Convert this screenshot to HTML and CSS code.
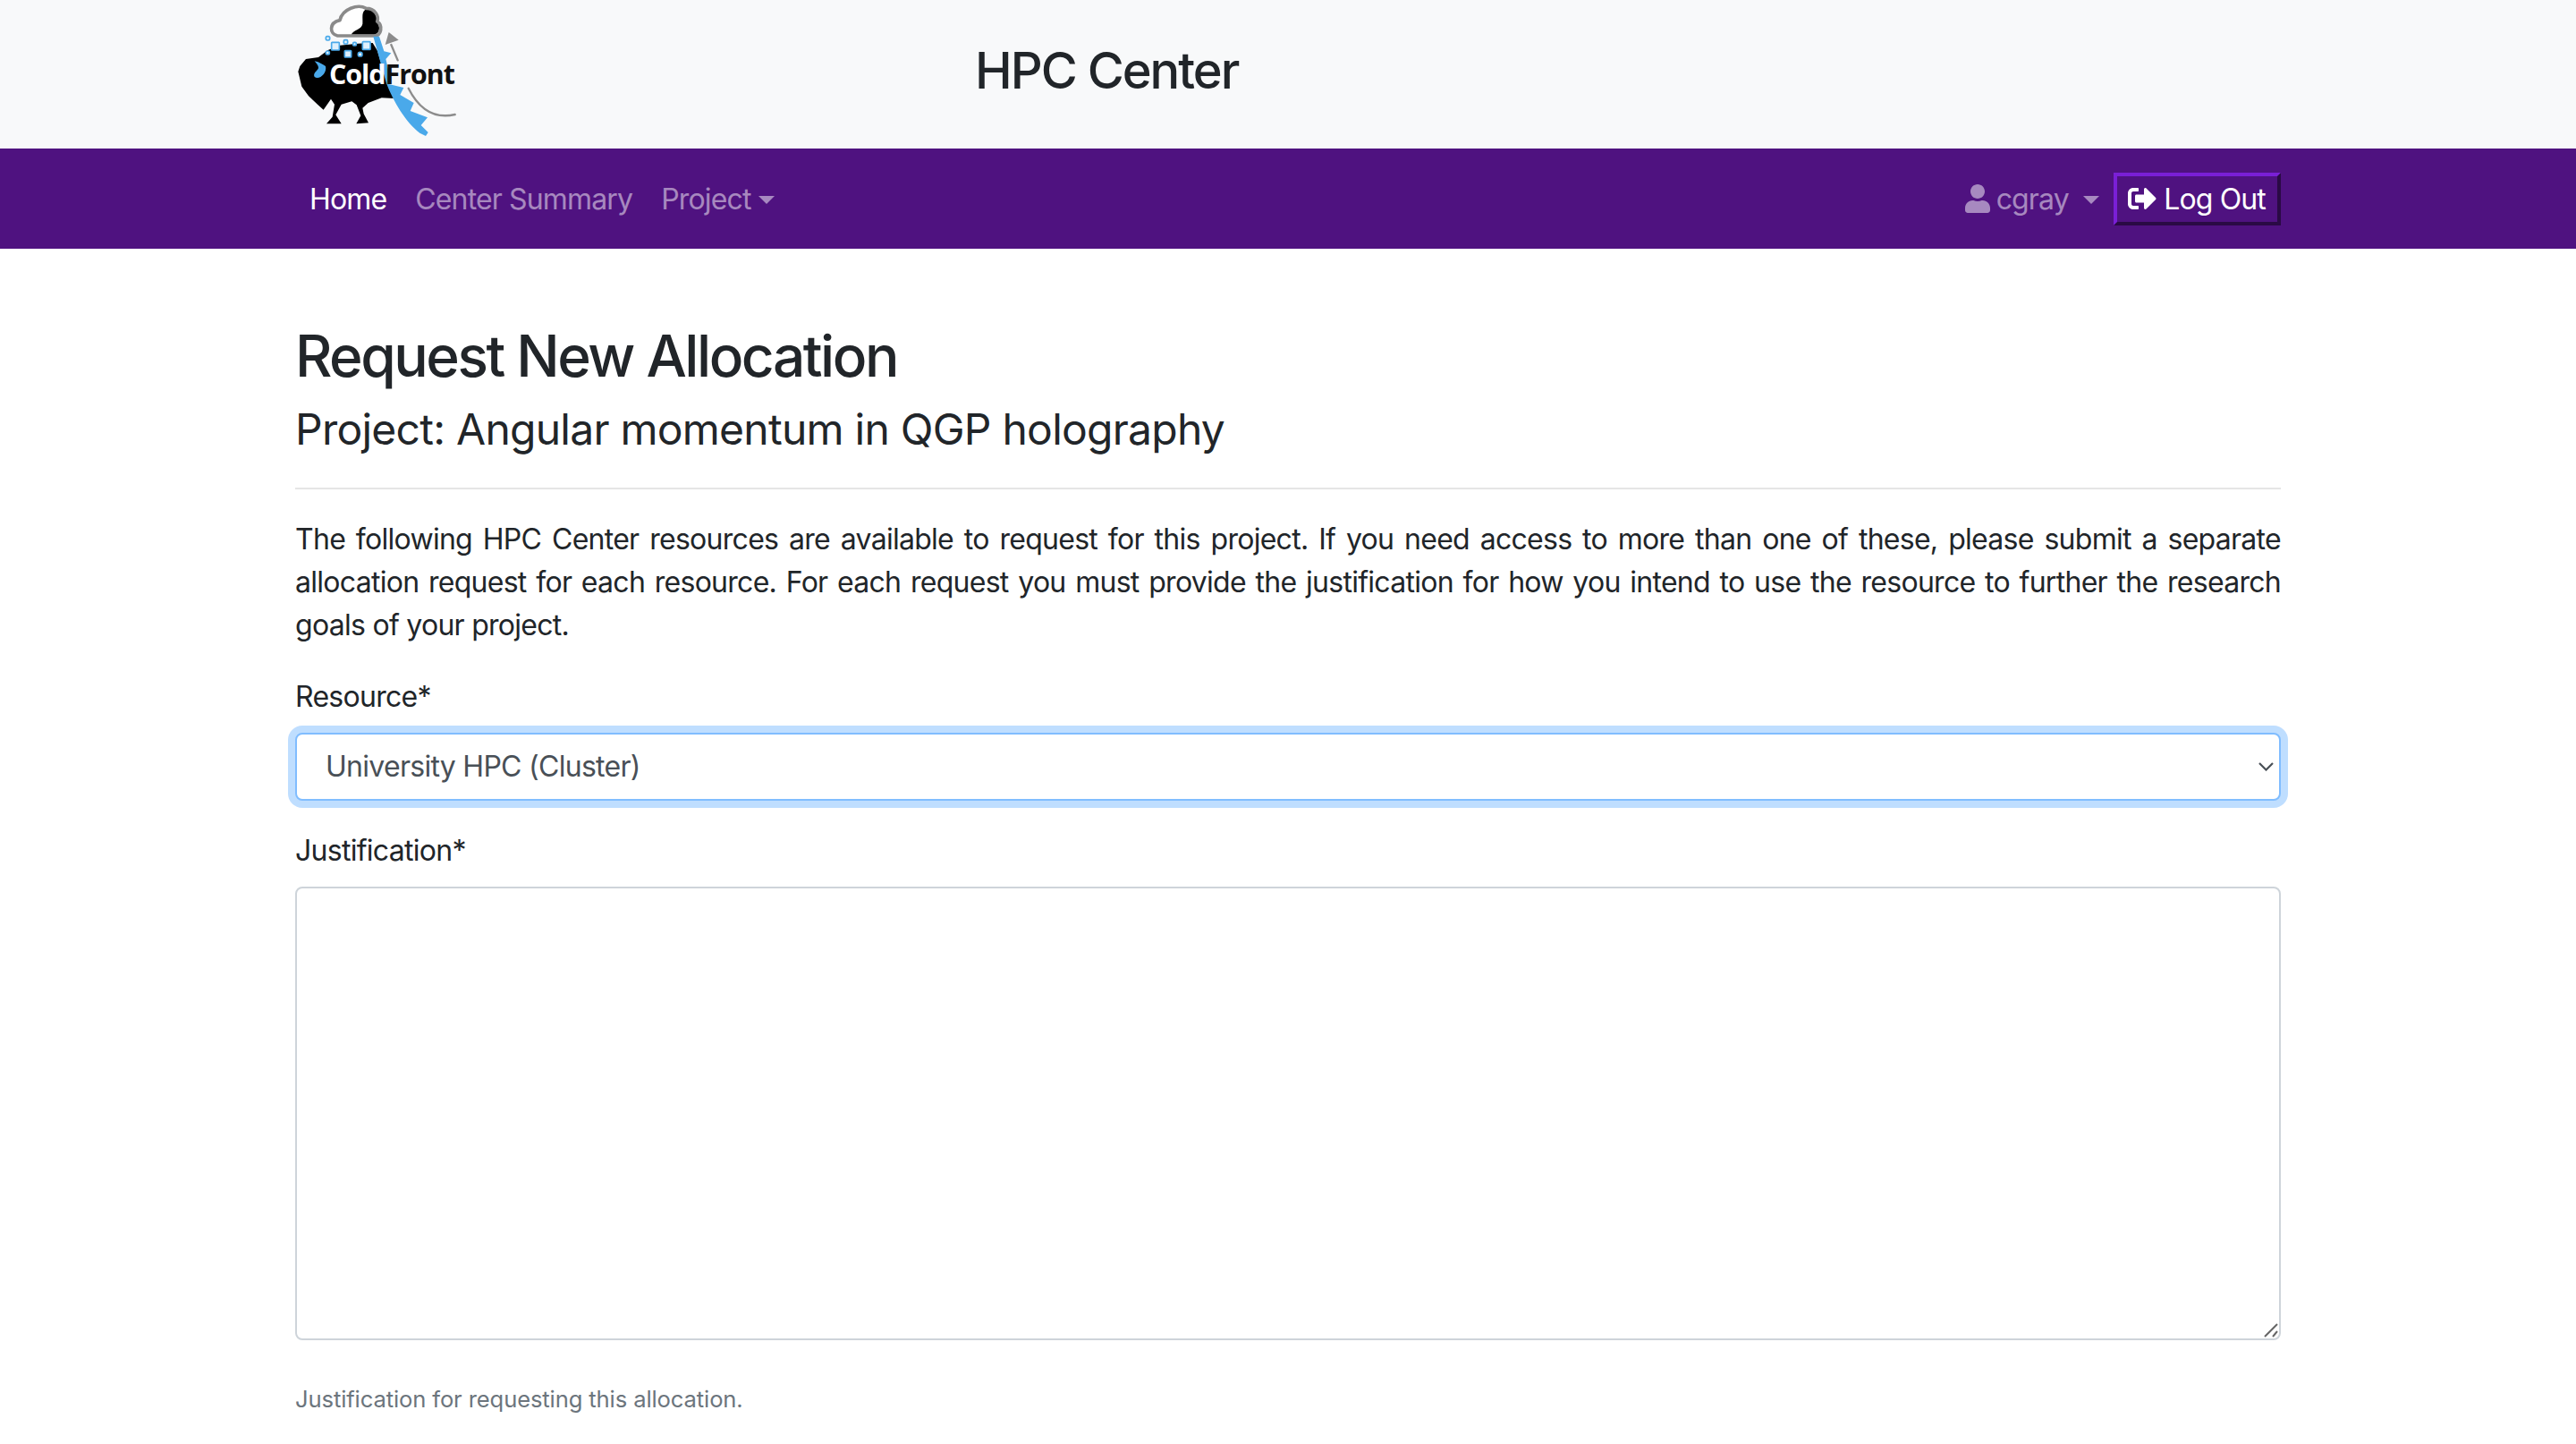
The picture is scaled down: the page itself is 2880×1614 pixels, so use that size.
FILE: index.html
```html
<!DOCTYPE html>
<html lang="en">
<head>
<meta charset="utf-8">
<title>HPC Center</title>
<link rel="stylesheet" href="styles.css">
</head>
<body>
<header class="brandbar">
  <div class="container brand-row">
    <svg class="logo" viewBox="0 0 780 510" aria-label="ColdFront">
      <path class="bison" d="M100 240 L106 222 L126 198 L168 192 L200 168 L240 152 L300 146 L350 144 L366 170 L382 225 L402 285 L424 330 L380 328 L335 345 L316 362 L320 382 L336 412 L295 415 L310 388 L296 352 L280 340 L245 350 L226 385 L245 415 L195 415 L215 392 L222 350 L210 332 L185 368 L165 350 L135 322 L112 290 Z"/>
      <path class="cloud-fill" d="M232 120 C205 115 202 76 240 68 C248 30 300 12 328 28 C358 28 372 55 365 72 C385 85 380 120 355 120 Z"/>
      <path class="cloud-dark" d="M278 116 C285 100 312 100 316 80 C318 60 310 38 330 30 C355 32 368 55 362 74 C378 86 374 114 355 116 Z"/>
      <path class="cloud-line" d="M232 120 C205 115 202 76 240 68 C248 30 300 12 328 28 C358 28 372 55 365 72 C385 85 380 120 355 120 Z"/>
      <path class="front" d="M352 122 L372 122 L388 172 L412 178 L394 198 L404 240 L404 282 L454 294 L442 318 L488 345 L476 372 L534 394 L512 420 L536 444 L528 456 L508 446 C460 410 420 340 396 280 Z"/>
      <path class="arrow-line" d="M412 150 L434 202 M470 296 C505 365 555 400 626 384"/>
      <path class="arrow-head" d="M404 108 L437 134 L392 150 Z"/>
      <g class="chips">
        <rect x="212" y="142" width="26" height="26" rx="2"/>
        <rect x="316" y="140" width="26" height="26" rx="2"/>
        <rect x="256" y="170" width="22" height="22" rx="2"/>
        <rect x="193" y="122" width="13" height="13" rx="5"/>
        <rect x="253" y="134" width="13" height="13" rx="4"/>
        <rect x="284" y="142" width="11" height="11" rx="4"/>
        <rect x="193" y="171" width="12" height="12" rx="5"/>
      </g>
      <circle class="chip-dot" cx="308" cy="182" r="7"/>
      <path class="moon" d="M155 205 C172 208 184 218 192 222 C198 245 170 270 155 258 C148 245 165 238 168 228 C168 218 160 212 155 205 Z"/>
      <text class="logo-text" x="204" y="282">Cold<tspan class="logo-front">Front</tspan></text>
    </svg>
    <h1 class="site-title">HPC Center</h1>
  </div>
</header>
<nav class="navbar">
  <div class="container nav-row">
    <ul class="nav-list">
      <li><a class="nav-link active" href="#">Home</a></li>
      <li><a class="nav-link" href="#">Center Summary</a></li>
      <li><a class="nav-link caret" href="#">Project</a></li>
    </ul>
    <ul class="nav-list">
      <li>
        <a class="nav-link caret user-link" href="#">
          <svg class="icon icon-user" viewBox="0 0 448 512"><path d="M224 256c70.7 0 128-57.3 128-128S294.7 0 224 0 96 57.3 96 128s57.3 128 128 128zm89.6 32h-16.7c-22.2 10.2-46.9 16-72.9 16s-50.6-5.8-72.9-16h-16.7C60.2 288 0 348.2 0 422.4V464c0 26.5 21.5 48 48 48h352c26.5 0 48-21.5 48-48v-41.6c0-74.2-60.2-134.4-134.4-134.4z"/></svg>
          cgray
        </a>
      </li>
      <li>
        <a class="logout" href="#">
          <svg class="icon icon-out" viewBox="0 0 512 512"><path d="M497 273L329 441c-15 15-41 4.5-41-17v-96H152c-13.3 0-24-10.7-24-24v-96c0-13.3 10.7-24 24-24h136V88c0-21.4 25.9-32 41-17l168 168c9.3 9.4 9.3 24.6 0 34zM192 436v-40c0-6.6-5.4-12-12-12H96c-17.7 0-32-14.3-32-32V160c0-17.7 14.3-32 32-32h84c6.6 0 12-5.4 12-12V76c0-6.6-5.4-12-12-12H96c-53 0-96 43-96 96v192c0 53 43 96 96 96h84c6.6 0 12-5.4 12-12z"/></svg>
          Log Out
        </a>
      </li>
    </ul>
  </div>
</nav>
<main class="container content">
  <h2 class="page-title">Request New Allocation</h2>
  <h3 class="page-sub">Project: Angular momentum in QGP holography</h3>
  <hr class="rule">
  <p class="intro">The following HPC Center resources are available to request for this project. If you need access to more than one of these, please submit a separate allocation request for each resource. For each request you must provide the justification for how you intend to use the resource to further the research goals of your project.</p>
  <form>
    <div class="field">
      <label class="label" for="res">Resource*</label>
      <div class="select-wrap">
        <select id="res" class="control select"><option>University HPC (Cluster)</option></select>
        <svg class="chevron" viewBox="0 0 17 10"><path d="M1 1 L8.5 8.5 L16 1"/></svg>
      </div>
    </div>
    <div class="field">
      <label class="label" for="just">Justification*</label>
      <div class="textarea-wrap">
        <textarea id="just" class="control textarea"></textarea>
        <svg class="grip" viewBox="0 0 16 16"><path d="M1 15 L15 1 M10 15 L15 9"/></svg>
      </div>
      <small class="help">Justification for requesting this allocation.</small>
    </div>
  </form>
</main>
</body>
</html>
```
FILE: styles.css
```css
* { box-sizing: border-box; }
html, body { margin: 0; padding: 0; height: 100%; overflow: hidden; }
body {
  font-family: Inter, "Liberation Sans", sans-serif;
  font-size: 32px;
  line-height: 48px;
  letter-spacing: -0.72px;
  color: #212529;
  background: #fff;
}
.container { width: 2280px; margin: 0 auto; padding: 0 30px; }

.brandbar { background: #f8f9fa; height: 166px; }
.brand-row { display: flex; align-items: flex-start; }
.logo { width: 260px; height: 170px; margin-left: -30px; flex: none; display: block; }
.bison { fill: #000; }
.cloud-fill { fill: #fff; }
.cloud-dark { fill: #000; }
.cloud-line { fill: none; stroke: #8a8a8a; stroke-width: 11; stroke-linejoin: round; }
.front { fill: #4aa9ea; }
.arrow-line { fill: none; stroke: #8c8c8c; stroke-width: 7; stroke-linecap: round; }
.arrow-head { fill: #8c8c8c; }
.chips rect { fill: #dff0fc; stroke: #4aa9ea; stroke-width: 5; }
.chip-dot { fill: #fff; stroke: #4aa9ea; stroke-width: 5; }
.moon { fill: #4aa9ea; }
.logo-text { font-family: "Open Sans", sans-serif; font-weight: 700; font-size: 91px; letter-spacing: -3px; fill: #fff; }
.logo-front { fill: #111; }
.site-title { margin: 46px 0 0 530px; font-size: 56px; line-height: 67px; font-weight: 500; letter-spacing: -2px; }

.navbar { background: #4f1280; height: 112px; }
.nav-row { display: flex; justify-content: space-between; align-items: center; height: 100%; }
.nav-list { list-style: none; margin: 0; padding: 0; display: flex; align-items: center; }
.nav-link { display: block; padding: 17px 16px 15px; color: rgba(255,255,255,.5); letter-spacing: -0.85px; text-decoration: none; white-space: nowrap; }
.nav-link.active { color: #fff; }
.caret::after {
  content: "";
  display: inline-block;
  margin-left: 8px;
  vertical-align: 6px;
  border-top: 9px solid;
  border-left: 9px solid transparent;
  border-right: 9px solid transparent;
}
.user-link { padding-right: 16px; }
.user-link::after { margin-left: 8px; }
.icon { fill: currentColor; display: inline-block; vertical-align: -4px; }
.icon-user { width: 28px; height: 32px; margin-right: -1px; }
.icon-out { width: 32px; height: 32px; }
.logout {
  display: block;
  height: 59px;
  width: 187px;
  padding: 0 12px;
  line-height: 51px;
  color: #fff;
  letter-spacing: -0.85px;
  text-decoration: none;
  white-space: nowrap;
  border: 4px solid;
  border-color: #7a1fd6 #2a0a45 #2a0a45 #7a1fd6;
}

.page-title { margin: 82px 0 0; font-size: 64px; line-height: 76px; font-weight: 500; letter-spacing: -2.48px; }
.page-sub { margin: 15px 0 0; font-size: 48px; line-height: 58px; font-weight: 400; letter-spacing: -0.75px; }
.rule { margin: 36px 0 0; border: 0; border-top: 2px solid rgba(0,0,0,.1); }
.intro { margin: 32px 0 0; text-align: justify; }
.field { margin-top: 32px; }
.label { display: block; margin-bottom: 16px; }
.control {
  display: block;
  width: 100%;
  font: inherit;
  letter-spacing: inherit;
  color: #495057;
  background: #fff;
  border: 2px solid #ced4da;
  border-radius: 8px;
}
.select-wrap, .textarea-wrap { position: relative; }
.select {
  height: 76px;
  padding: 0 60px 0 32px;
  appearance: none;
  border-color: #80bdff;
  box-shadow: 0 0 0 8px rgba(0,123,255,.25);
  outline: 0;
}
.chevron {
  position: absolute;
  right: 8px;
  top: 33px;
  width: 17px;
  height: 10px;
  fill: none;
  stroke: #495057;
  stroke-width: 2.2;
}
.textarea { height: 507px; padding: 12px 24px; resize: none; }
.grip {
  position: absolute;
  right: 3px;
  bottom: 3px;
  width: 16px;
  height: 16px;
  fill: none;
  stroke: #666;
  stroke-width: 2;
}
.help { display: block; margin-top: 47px; font-size: 25.6px; line-height: 38px; letter-spacing: -0.12px; color: #6c757d; }
```
